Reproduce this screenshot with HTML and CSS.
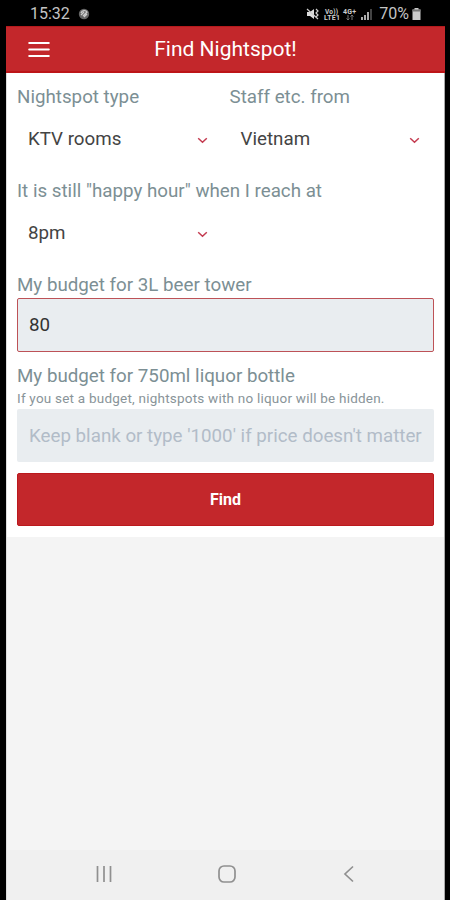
FILE: index.html
```
<!DOCTYPE html>
<html lang="en">
<head>
<meta charset="utf-8">
<title>Find Nightspot!</title>
<link rel="stylesheet" href="styles.css">
</head>
<body>
<div class="phone">
  <div class="status">
    <span class="clock">15:32</span>
    <svg class="app-mark" width="12" height="12" viewBox="0 0 12 12"><circle cx="6" cy="6" r="5.200" fill="#666"/><path d="M3 5c1-3 5-3 6-1L5 8M3 7l3-3M6 9l3-3" fill="none" stroke="#ccc" stroke-width="1.300"/></svg>
    <svg class="signals" width="68" height="14" viewBox="0 0 68 14">
      <path d="M1 5h3l4-3v10L4 9H1z" fill="#ddd"/><path d="M1 2l11 10M10 2l2 2-2 2 2 2-2 2" fill="none" stroke="#ccc" stroke-width="1.200"/>
      <g fill="#ccc" font-family="Roboto, sans-serif" font-weight="700"><text x="19" y="6.500" font-size="6.500" textLength="13">Vo))</text><text x="18" y="13" font-size="7" textLength="16">LTE1</text><text x="37" y="7" font-size="7" textLength="13">4G+</text></g>
      <path d="M42 8v5m-1.500-1.500L42 13l1.500-1.500M46 13V8m-1.500 1.500L46 8l1.500 1.500" fill="none" stroke="#777"/>
      <path d="M55 13v-3h2v3zM58 13V8h2v5zM61 13V5h2v8z" fill="#aaa"/><path d="M64 13V2h2v11z" fill="#444"/>
    </svg>
    <span class="percent">70%</span>
    <svg class="battery" width="9" height="12" viewBox="0 0 9 12"><path d="M2.500 0h4v1.500h2V12h-8V1.500h2z" fill="#ccc"/><path d="M.5 1.500h8v2h-8z" fill="#777"/></svg>
  </div>
  <div class="screen">
    <header class="bar">
      <svg class="menu" width="22" height="17" viewBox="0 0 22 17"><path d="M1.300 2h19.400M1.300 8.500h19.400M1.300 15h19.400" stroke="#fff" stroke-width="2.200" stroke-linecap="round"/></svg>
      <h1 class="title">Find Nightspot!</h1>
    </header>
    <main class="form">
      <div class="row">
        <div class="col">
          <div class="label">Nightspot type</div>
          <div class="select"><span>KTV rooms</span><svg class="chev" width="11" height="7" viewBox="0 0 11 7"><path d="M1.200 1.200l4.300 4 4.300-4"/></svg></div>
        </div>
        <div class="col">
          <div class="label">Staff etc. from</div>
          <div class="select"><span>Vietnam</span><svg class="chev" width="11" height="7" viewBox="0 0 11 7"><path d="M1.200 1.200l4.300 4 4.300-4"/></svg></div>
        </div>
      </div>
      <div class="row">
        <div class="col">
          <div class="label">It is still "happy hour" when I reach at</div>
          <div class="select"><span>8pm</span><svg class="chev" width="11" height="7" viewBox="0 0 11 7"><path d="M1.200 1.200l4.300 4 4.300-4"/></svg></div>
        </div>
      </div>
      <div class="label">My budget for 3L beer tower</div>
      <div class="input active">80</div>
      <div class="label liquor">My budget for 750ml liquor bottle</div>
      <div class="hint">If you set a budget, nightspots with no liquor will be hidden.</div>
      <div class="input placeholder">Keep blank or type '1000' if price doesn't matter</div>
      <div class="button">Find</div>
    </main>
    <div class="blank"></div>
    <nav class="nav">
      <svg width="18" height="18" viewBox="0 0 18 18"><path d="M2.500 1v16M9 1v16M15.500 1v16"/></svg>
      <svg width="18" height="18" viewBox="0 0 18 18"><rect x="1" y="1" width="16" height="16" rx="5"/></svg>
      <svg width="18" height="18" viewBox="0 0 18 18"><path d="M13 1.500L5 9l8 7.500"/></svg>
    </nav>
  </div>
</div>
</body>
</html>
```
FILE: styles.css
```
* { box-sizing: border-box; }
body { margin: 0; background: #000; font-family: Roboto, sans-serif; }
.phone { width: 450px; height: 900px; padding: 0 5px 0 6px; background: #000; display: flex; flex-direction: column; overflow: hidden; }
.status { height: 26px; display: flex; align-items: center; color: #c4c4c4; padding: 1px 24px 0 24px; white-space: nowrap; }
.clock { font-size: 16px; }
.app-mark { margin-left: 8px; }
.signals { margin-left: auto; }
.percent { font-size: 16px; margin-left: 5px; }
.battery { margin-left: 3px; }
.screen { flex: 1; display: flex; flex-direction: column; background: #f4f4f4; border-left: 1px solid #ddd; border-right: 1px solid #aaa; }
.bar { height: 47px; margin: 0 -1px; background: #c3272b; border-top: 1px solid #b51a1c; border-bottom: 2px solid #bd1518; display: grid; grid-template-columns: 1fr auto 1fr; align-items: center; color: #fff; }
.menu { margin-left: 22px; }
.title { margin: 0; font-size: 21px; line-height: 24px; font-weight: 400; }
.form { height: 464px; background: #fff; padding: 11px 10px 0; white-space: nowrap; }
.row { display: grid; grid-template-columns: repeat(2, minmax(0, 1fr)); column-gap: 8px; height: 94px; }
.label { height: 26px; line-height: 26px; font-size: 18.750px; color: #7c8f94; }
.select { height: 58px; padding: 0 14px 0 11px; display: flex; align-items: center; justify-content: space-between; font-size: 18.750px; color: #444; }
.chev { margin-top: 3px; fill: none; stroke: #c43b50; stroke-width: 1.500; }
.input { height: 53px; padding: 0 12px; display: flex; align-items: center; background: #e9edf0; font-size: 18.750px; color: #333; border-radius: 2px; }
.active { height: 54px; border: 1px solid #bd5257; padding: 0 11px; }
.liquor { margin-top: 11px; }
.hint { height: 20px; line-height: 18px; font-size: 13.500px; letter-spacing: .22px; color: #899499; }
.placeholder { color: #b2bcc8; }
.button { height: 53px; margin-top: 11px; background: #c3272b; border: 1px solid #bb191d; border-radius: 2px; color: #fff; display: flex; align-items: center; justify-content: center; font-size: 16px; font-weight: 700; }
.blank { flex: 1; }
.nav { height: 50px; background: #f0f0f0; display: flex; align-items: center; justify-content: space-between; padding: 0 86px 2px 88px; fill: none; stroke: #909090; stroke-width: 1.700; }
```
